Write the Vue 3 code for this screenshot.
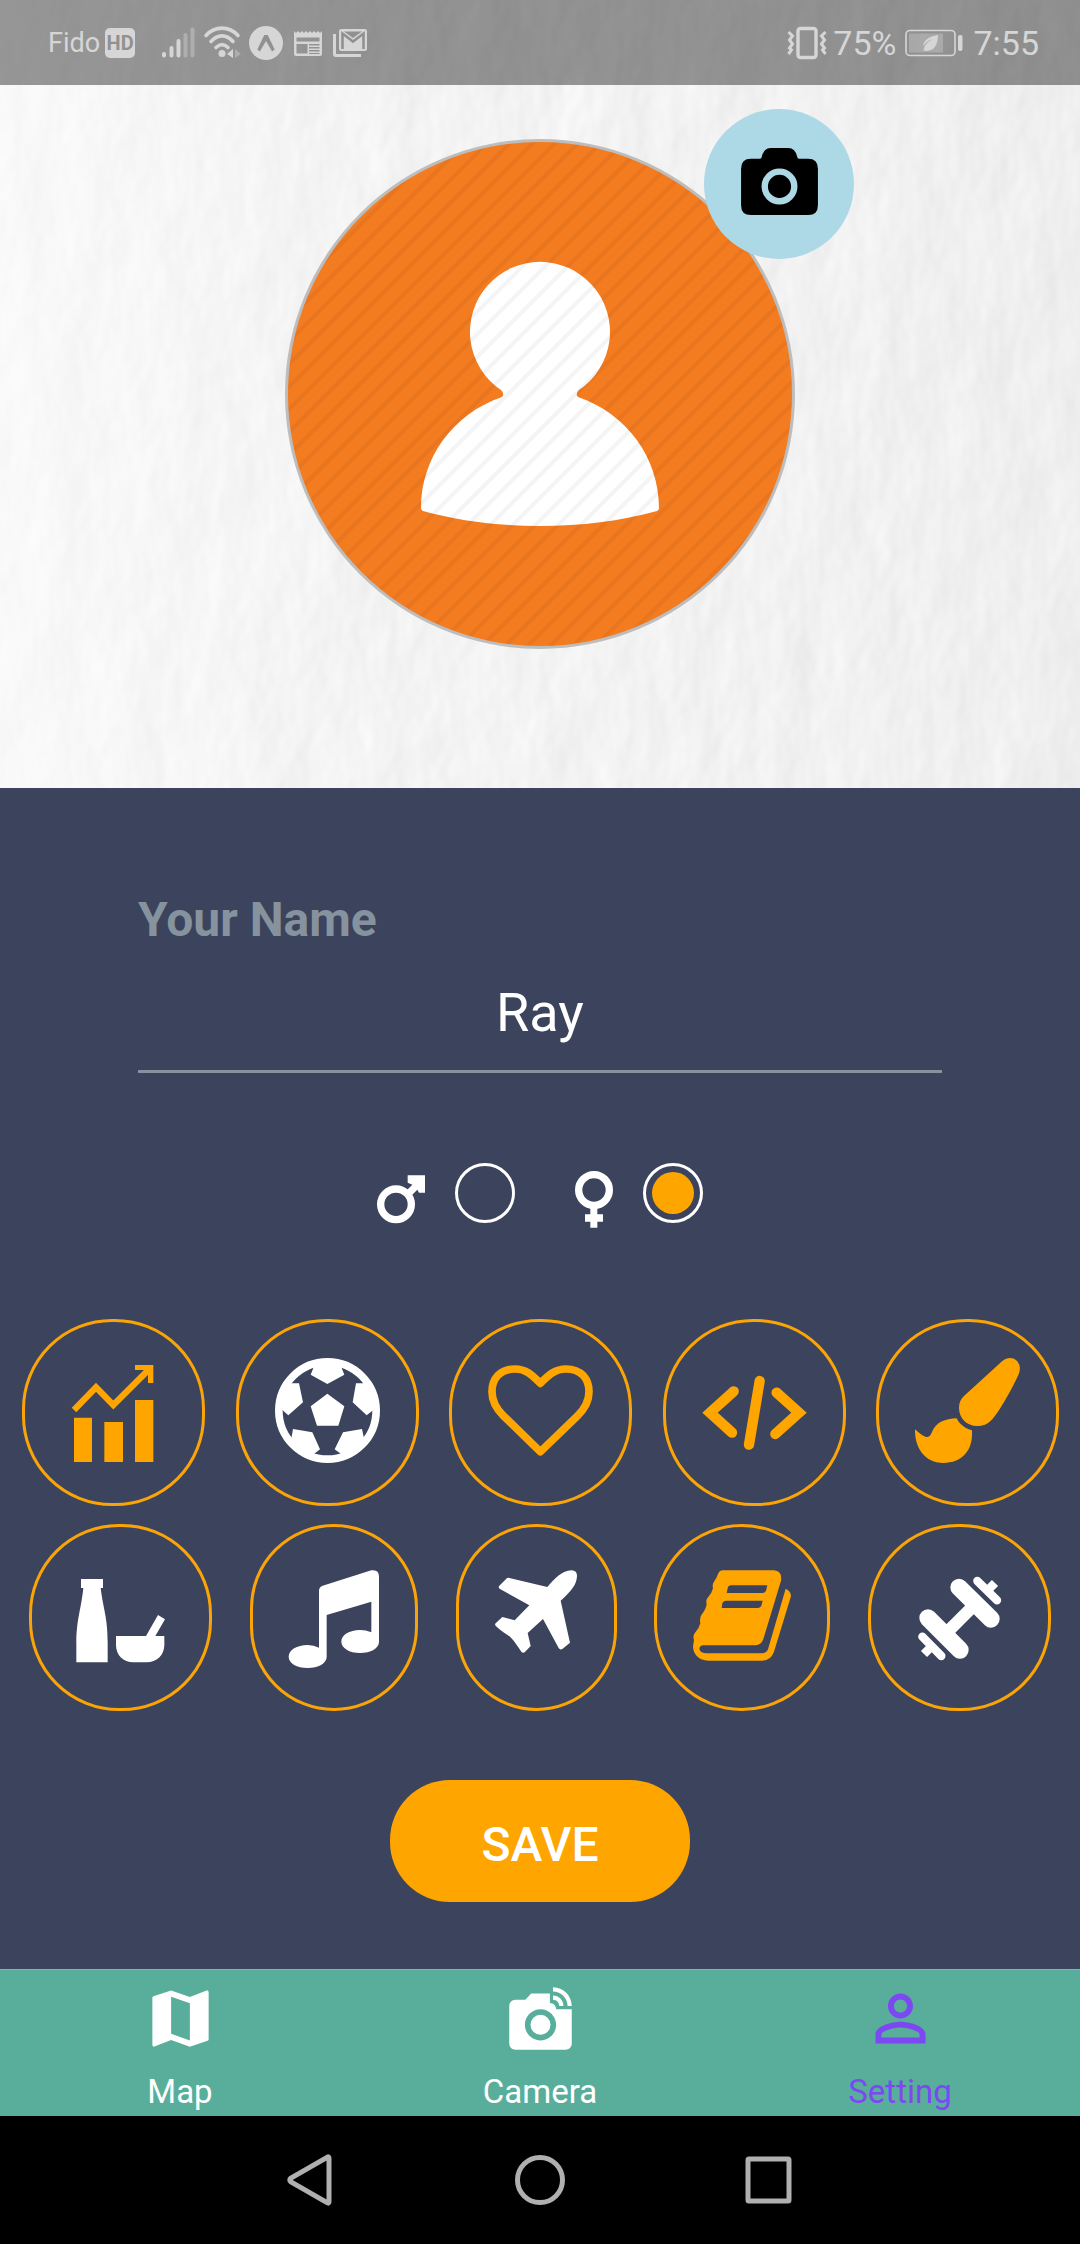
<script setup>
import { ref } from 'vue'

const name = ref('Ray')
const gender = ref('female')
const activeTab = ref('Setting')

const rows = ref([
  [
    { id: 'business', label: 'Business', on: true, width: 105, box: '183 174 315 315' },
    { id: 'sports', label: 'Sports', on: false, width: 105, box: '822 174 315 315' },
    { id: 'dating', label: 'Dating', on: true, width: 105, box: '204 174 315 315' },
    { id: 'coding', label: 'Coding', on: true, width: 105, box: '843 174 315 315' },
    { id: 'art', label: 'Art', on: true, width: 105, box: '795 174 315 315' },
  ],
  [
    { id: 'food', label: 'Food', on: false, width: 105, box: '204 789 315 315' },
    { id: 'music', label: 'Music', on: false, width: 90, box: '867 789 270 315' },
    { id: 'travel', label: 'Travel', on: false, width: 83, box: '225 789 249 315' },
    { id: 'reading', label: 'Reading', on: true, width: 98, box: '819 789 294 315' },
    { id: 'fitness', label: 'Fitness', on: false, width: 105, box: '771 789 315 315' },
  ],
])

const tabs = [
  {
    label: 'Map',
    path: 'M20.5 3l-.16.03L15 5.1 9 3 3.36 4.9c-.21.07-.36.25-.36.48V20.5c0 .28.22.5.5.5l.16-.03L9 18.9l6 2.1 5.64-1.9c.21-.07.36-.25.36-.48V3.5c0-.28-.22-.5-.5-.5zM15 19l-6-2.11V5l6 2.11V19z',
  },
  {
    label: 'Camera',
    path: 'M12 10.8a3.2 3.2 0 1 0 0 6.4 3.2 3.2 0 1 0 0-6.4zM16 3.33c2.58 0 4.67 2.09 4.67 4.67H22c0-3.31-2.69-6-6-6v1.33M16 6c1.11 0 2 .89 2 2h1.33c0-1.84-1.49-3.33-3.33-3.33V6M17 9c0-1.11-.89-2-2-2V4H9L7.17 6H4c-1.1 0-2 .9-2 2v12c0 1.1.9 2 2 2h16c1.1 0 2-.9 2-2V9h-5zm-5 10c-2.76 0-5-2.24-5-5s2.24-5 5-5 5 2.24 5 5-2.24 5-5 5z',
  },
  {
    label: 'Setting',
    path: 'M12 5.9c1.16 0 2.1.94 2.1 2.1s-.94 2.1-2.1 2.1S9.9 9.16 9.9 8s.94-2.1 2.1-2.1m0 9c2.97 0 6.1 1.46 6.1 2.1v1.1H5.9V17c0-.64 3.13-2.1 6.1-2.1M12 4C9.79 4 8 5.79 8 8s1.79 4 4 4 4-1.79 4-4-1.79-4-4-4zm0 9c-2.67 0-8 1.34-8 4v3h16v-3c0-2.66-5.33-4-8-4z',
  },
]
</script>

<template>
  <div class="screen">
    <header class="hero">
      <svg class="plaster" aria-hidden="true">
        <filter id="plaster" x="0" y="0" width="100%" height="100%" color-interpolation-filters="sRGB">
          <feTurbulence type="fractalNoise" baseFrequency="0.014 0.008" numOctaves="4" seed="7" result="n" />
          <feDiffuseLighting in="n" lighting-color="#ffffff" surfaceScale="1" diffuseConstant="1.08">
            <feDistantLight azimuth="200" elevation="62" />
          </feDiffuseLighting>
        </filter>
        <linearGradient id="light">
          <stop offset="0" stop-color="#fff" stop-opacity=".5" />
          <stop offset=".35" stop-color="#fff" stop-opacity="0" />
          <stop offset="1" stop-color="#000" stop-opacity=".02" />
        </linearGradient>
        <rect width="100%" height="100%" filter="url(#plaster)" />
        <rect width="100%" height="100%" fill="url(#light)" />
      </svg>

      <div class="status">
        <span class="carrier">Fido</span>
        <span class="hd">HD</span>
        <svg class="signal" width="33" height="34" viewBox="0 0 33 34">
          <g stroke="currentColor" stroke-width="4" stroke-linecap="round">
            <path d="M2 28v1.500M9.500 22v7.500M16.500 15v14.500" />
            <path d="M23.500 9v20.500M30.500 3.500v26" opacity=".4" />
          </g>
        </svg>
        <svg width="36" height="34" viewBox="0 0 36 34">
          <g fill="none" stroke="currentColor" stroke-width="3.600" stroke-linecap="round">
            <path d="M2 9.500C11-.300 25-.300 34 9.500M7 15.500c7-7.500 15-7.500 22 0M12 21.500c4-4 8-4 12 0" />
          </g>
          <circle cx="18" cy="27.500" r="3.500" fill="currentColor" />
          <path d="M29 23v9l-6-4z" fill="currentColor" />
          <path d="M31 23v9l6-4z" fill="currentColor" opacity=".4" />
        </svg>
        <svg width="34" height="34" viewBox="0 0 34 34">
          <circle cx="17" cy="17" r="17" fill="currentColor" />
          <path d="M15.300 9h3.400l7 14.500-2.600 2-6.100-10.500-6.100 10.500-2.600-2z" fill="#919191" />
        </svg>
        <svg width="32" height="34" viewBox="0 0 32 34">
          <path fill="currentColor" fill-rule="evenodd" d="M2 5l2 2 2-2 2 2 2-2 2 2 2-2 2 2 2-2 2 2 2-2 2 2 2-2 2 2 2-2v23a2 2 0 0 1-2 2H4a2 2 0 0 1-2-2zM4.500 11.500v4h23v-4zM4.500 18v9.500h11V18zM17 18v1.500h10.500V18zM17 21v1.500h10.500V21zM17 24v1.500h10.500V24zM17 27v1h10.500v-1z" />
        </svg>
        <svg width="34" height="34" viewBox="0 0 34 34">
          <path fill="currentColor" d="M0 8h3v20h25v3H3a3 3 0 0 1-3-3z" />
          <rect x="6" y="3" width="28" height="22" rx="2.500" fill="currentColor" />
          <path d="M9.500 23V7.500L20 15.500l10.500-8V23" fill="none" stroke="#919191" stroke-width="2.600" />
          <path d="M11 5.500h18l-9 6.500z" fill="#919191" />
        </svg>
        <span class="spacer"></span>
        <svg width="40" height="34" viewBox="0 0 40 34">
          <rect x="11" y="2.500" width="18" height="29" rx="2.500" fill="none" stroke="currentColor" stroke-width="3.400" />
          <path d="M1.500 6l4 4-3 4 3 4-3 4 2 2-3 4M38.500 6l-4 4 3 4-3 4 3 4-2 2 3 4" fill="none" stroke="currentColor" stroke-width="3" />
        </svg>
        <span class="percent">75%</span>
        <svg class="battery" width="59" height="34" viewBox="0 0 59 34">
          <rect x="1" y="4.500" width="49" height="25" rx="4" fill="none" stroke="currentColor" stroke-width="1.600" />
          <rect x="4" y="7.500" width="34" height="19" fill="currentColor" opacity=".35" />
          <rect x="53" y="9" width="4.500" height="16" rx="2" fill="currentColor" />
          <path d="M33 9c-9 1.500-15 5-14.500 11.500 2-4 5-6 9-7.500-5 3-8 6-9 11.500 9 2 14.500-4 14.500-15.500z" fill="currentColor" />
        </svg>
        <span class="clock">7:55</span>
      </div>

      <div class="avatar">
        <svg class="photo" viewBox="0 0 510 510" role="img" aria-label="Profile picture">
          <defs>
            <pattern id="stripes" width="16" height="16" patternUnits="userSpaceOnUse" patternTransform="rotate(45)">
              <rect width="4" height="16" fill="#000" opacity=".045" />
            </pattern>
          </defs>
          <circle cx="255" cy="255" r="255" fill="#bdbdbd" />
          <circle cx="255" cy="255" r="252" fill="#f37b20" />
          <path fill="#fff" d="M216 251A70 70 0 1 1 294 251Q290 255 293 258C343 275 374 320 374 369Q374 371 372 372C300 392 210 392 138 372Q136 371 136 369C136 320 167 275 217 258Q220 255 216 251Z" />
          <circle cx="255" cy="255" r="252" fill="url(#stripes)" />
        </svg>
        <button class="change" type="button" aria-label="Change picture">
          <svg width="77" height="67" viewBox="0 0 78 68">
            <path fill="#000" d="M10 11h9q2 0 2-2 2-9 9-9h18q7 0 9 9 0 2 2 2h9q10 0 10 10v37q0 10-10 10H10Q0 68 0 58V21Q0 11 10 11z" />
            <circle cx="39" cy="39" r="15" fill="none" stroke="#add8e6" stroke-width="6.500" />
          </svg>
        </button>
      </div>
    </header>

    <main class="form">
      <div class="field">
        <label for="name">Your Name</label>
        <input id="name" v-model="name" type="text" />
      </div>

      <div class="genders">
        <label class="gender">
          <svg width="48" height="60" viewBox="111 68 144 180" role="img" aria-label="Male">
            <circle cx="168" cy="192" r="46" fill="none" stroke="#fff" stroke-width="22" />
            <path d="M203 105h52v52h-18l-5-9-22 22-15-15 22-22-14-6z" fill="#fff" />
          </svg>
          <input v-model="gender" type="radio" name="gender" value="male" />
        </label>
        <label class="gender">
          <svg width="38" height="60" viewBox="705 68 114 180" role="img" aria-label="Female">
            <circle cx="762" cy="149" r="46" fill="none" stroke="#fff" stroke-width="22" />
            <path d="M751 200h21v22h17v22h-17v18h-21v-18h-16v-22h16z" fill="#fff" />
          </svg>
          <input v-model="gender" type="radio" name="gender" value="female" />
        </label>
      </div>

      <div class="interests">
        <div v-for="(row, r) in rows" :key="r" class="row">
          <button
            v-for="item in row"
            :key="item.id"
            type="button"
            class="interest"
            :class="{ on: item.on }"
            :aria-label="item.label"
            :aria-pressed="item.on"
            @click="item.on = !item.on"
          >
            <svg :width="item.width" height="105" :viewBox="item.box" fill="currentColor">
              <g v-if="item.id === 'business'">
                <path d="M222 353h54v133h-54zM313 366h56v120h-56zM405 300h55v186h-55zM405 195h55v54h-16v-39h-39z" />
                <path d="M222 330l66-68 52 53 109-109" fill="none" stroke="currentColor" stroke-width="19" />
              </g>
              <g v-else-if="item.id === 'sports'">
                <circle cx="979.500" cy="331.500" r="146" fill="none" stroke="currentColor" stroke-width="23" />
                <path d="M979 281l51 38-18 58h-64l-19-58z" />
                <path d="M937 192h85v12l8 20-51 28-50-28 8-20z" />
                <path d="M1065 250h26l24 20 16 56-14 4-20 16-42-39z" />
                <path d="M894 250h-26l-24 20-16 56 16 4 18 16 44-39z" />
                <path d="M1026 397l57-10 5 23 6 20-50 44-24-12-19-14z" />
                <path d="M934 397l-58-10-4 23-8 20 50 44 25-12 18-14z" />
              </g>
              <path
                v-else-if="item.id === 'dating'"
                d="M361 250C336 225 318 207 285 207C240 207 216 236 216 275C216 305 230 327 250 347L361 455L473 347C493 327 507 305 507 275C507 236 483 207 438 207C405 207 386 225 361 250Z"
                fill="none"
                stroke="currentColor"
                stroke-width="23"
                stroke-linejoin="round"
              />
              <g v-else-if="item.id === 'coding'" fill="none" stroke="currentColor" stroke-linecap="round">
                <path d="M938 274l-71 64 66 60M1067 278l67 60-71 64" stroke-width="31" />
                <path d="M1016 243l-32 191" stroke-width="31" />
              </g>
              <g v-else-if="item.id === 'art'">
                <path d="M1057 183C1072 170 1092 172 1102 184Q1115 200 1106 223C1090 258 1052 330 1028 356C1012 374 998 378 981 378C950 378 927 354 927 324C927 308 932 298 942 288Z" />
                <path d="M920 355C885 357 858 366 846 396C841 408 837 411 830 411C820 410 806 398 795 388C794 445 825 489 880 489C935 489 970 453 966 391C945 386 927 371 920 355Z" />
              </g>
              <g v-else-if="item.id === 'food'">
                <path d="M243 837h66v27h-7C310 930 323 950 323 1030V1087H229V1030C229 960 243 930 250 864h-7z" />
                <path d="M348 1008H438L474 945L495 958L466 1008H493V1035C493 1065 470 1087 440 1087H400C370 1087 348 1065 348 1035Z" />
              </g>
              <path
                v-else-if="item.id === 'music'"
                d="M957 872Q957 861 968 857L1114 811Q1137 808 1137 830V1025C1137 1045 1112 1059 1080 1059C1048 1059 1024 1044 1024 1025C1024 1005 1048 990 1080 990Q1098 990 1114 997V905L980 945V1070C980 1090 955 1104 923 1104C891 1104 866 1090 866 1070C866 1050 891 1035 923 1035Q942 1035 957 1043Z"
              />
              <path
                v-else-if="item.id === 'travel'"
                d="M382 861C405 835 425 812 455 811Q471 812 471 828C470 855 452 875 422 902L450 1028L427 1047Q420 1051 416 1044L369 957L323 999L332 1038L314 1057Q308 1060 304 1055C295 1042 285 1025 273 1013C260 1002 245 995 228 979Q223 974 227 970L247 951L284 961L328 916L240 867Q233 862 238 857L259 836Q263 832 268 834Z"
              />
              <path
                v-else-if="item.id === 'reading'"
                fill-rule="evenodd"
                d="M908 811H1062Q1087 813 1083 842L1030 1017Q1024 1036 1003 1036H850Q838 1037 838 1048Q842 1060 860 1060H1028Q1040 1058 1044 1048L1097 866Q1116 876 1112 892L1062 1055Q1052 1081 1028 1082H865Q822 1078 819 1040L822 1020Q818 1008 824 1000Q838 985 841 970Q838 955 844 945Q858 928 860 912Q857 902 862 895Q876 880 879 865Q876 852 882 845Q890 834 895 820Q899 811 908 811ZM934 856Q925 856 923 864L920 879H1029Q1036 878 1038 872L1042 856ZM917 902Q909 902 907 910L905 924H1014Q1022 923 1024 917L1028 902Z"
              />
              <g v-else fill="none" stroke="currentColor" stroke-linecap="round">
                <path d="M927 862l96 95M834 954l96 96" stroke-width="52" />
                <path d="M982 843l59 58M817 1010l57 58" stroke-width="25" />
                <path d="M882 1006l94-94" stroke-width="37" stroke-linecap="butt" />
                <path d="M1011 873l24-24M846 1038l-24 24" stroke-width="26" stroke-linecap="butt" />
              </g>
            </svg>
          </button>
        </div>
      </div>

      <button class="save" type="button">SAVE</button>
    </main>

    <nav class="tabs">
      <a
        v-for="tab in tabs"
        :key="tab.label"
        href="#"
        class="tab"
        :class="{ active: tab.label === activeTab }"
        @click.prevent="activeTab = tab.label"
      >
        <svg width="75" height="75" viewBox="0 0 24 24" fill="currentColor"><path :d="tab.path" /></svg>
        <span>{{ tab.label }}</span>
      </a>
    </nav>

    <div class="system">
      <button type="button" aria-label="Back">
        <svg width="50" height="54" viewBox="0 0 50 54"><path d="M43 5v44q0 2-2 .500L5 29q-2.500-2 0-4L41 4.500q2-1.500 2 .500z" /></svg>
      </button>
      <button type="button" aria-label="Home">
        <svg width="50" height="54" viewBox="0 0 50 54"><circle cx="25" cy="27" r="22.500" /></svg>
      </button>
      <button type="button" aria-label="Recents">
        <svg width="50" height="54" viewBox="0 0 50 54"><rect x="4" y="6" width="41" height="42" rx="1" /></svg>
      </button>
    </div>
  </div>
</template>

<style>
body {
  margin: 0;
  background: #000;
}
</style>

<style scoped>
.screen {
  display: flex;
  flex-direction: column;
  min-height: 100vh;
  font-family: Roboto, 'Noto Sans', sans-serif;
  background: #3b445c;
}

button {
  margin: 0;
  border: 0;
  font-family: inherit;
  cursor: pointer;
}

svg {
  display: block;
  flex: none;
  overflow: visible;
}

.hero {
  position: relative;
  display: flex;
  flex-direction: column;
  align-items: center;
  padding-bottom: 139px;
  background: #f3f3f3;
}

.plaster {
  position: absolute;
  inset: 0;
  width: 100%;
  height: 100%;
  overflow: hidden;
}

.status {
  position: relative;
  display: flex;
  align-items: center;
  gap: 9px;
  box-sizing: border-box;
  width: 100%;
  height: 85px;
  padding: 0 41px 0 48px;
  color: #d6d6d6;
  background: rgba(0, 0, 0, 0.4);
}

.carrier {
  font-size: 27px;
}

.hd {
  width: 30px;
  border-radius: 5px;
  margin-left: -4px;
  font-size: 20px;
  font-weight: 700;
  line-height: 30px;
  text-align: center;
  color: #919191;
  background: #d6d6d6;
}

.signal {
  margin-left: 18px;
}

.spacer {
  flex: 1;
}

.percent,
.clock {
  font-size: 34px;
}

.percent {
  margin-left: -3px;
}

.avatar {
  position: relative;
  width: 510px;
  margin-top: 54px;
}

.photo {
  width: 100%;
}

.change {
  position: absolute;
  top: -30px;
  right: -59px;
  display: flex;
  align-items: center;
  justify-content: center;
  width: 150px;
  height: 150px;
  padding: 0 0 5px;
  border-radius: 50%;
  background: #add8e6;
}

.form {
  display: flex;
  flex: 1;
  flex-direction: column;
  align-items: center;
  padding: 104px 0 67px;
}

.field {
  display: flex;
  flex-direction: column;
  align-self: stretch;
  margin: 0 138px;
}

.field label {
  font-size: 48px;
  font-weight: 700;
  line-height: 56px;
  color: #86939e;
}

.field input {
  box-sizing: border-box;
  width: 100%;
  height: 125px;
  padding: 6px 0 0;
  border: 0;
  border-bottom: 3px solid #86939e;
  border-radius: 0;
  outline: 0;
  font-family: inherit;
  font-size: 54px;
  text-align: center;
  color: #fff;
  background: transparent;
}

.genders {
  display: flex;
  gap: 60px;
  margin-top: 90px;
}

.gender {
  display: flex;
  align-items: center;
  gap: 30px;
}

.gender input {
  appearance: none;
  box-sizing: border-box;
  width: 60px;
  height: 60px;
  margin: 0;
  padding: 6px;
  border: 3px solid #fff;
  border-radius: 50%;
  background-clip: content-box;
}

.gender input:checked {
  background-color: #ffa500;
}

.interests {
  display: flex;
  flex-direction: column;
  align-self: stretch;
  gap: 18px;
  margin-top: 96px;
}

.row {
  display: flex;
  justify-content: space-between;
  padding: 0 21px 0 22px;
}

.row + .row {
  padding: 0 29px;
}

.interest {
  padding: 36px 36px 40px;
  border: 3px solid #fba408;
  border-radius: 90px;
  color: #fff;
  background: none;
}

.interest.on {
  color: #ffa500;
}

.save {
  width: 300px;
  height: 122px;
  margin-top: 69px;
  padding: 7px 0 0;
  border-radius: 60px;
  font-size: 48px;
  font-weight: 500;
  color: #fff;
  background: #ffa500;
}

.tabs {
  display: flex;
  border-top: 1px solid #a7a7aa;
  background: #59ae9b;
}

.tab {
  display: flex;
  flex: 1;
  flex-direction: column;
  align-items: center;
  gap: 16px;
  padding: 11px 0 5px;
  font-size: 33px;
  line-height: 39px;
  text-decoration: none;
  color: #fff;
}

.tab.active {
  color: #7c48f2;
}

.system {
  display: flex;
  align-items: center;
  justify-content: center;
  gap: 179px;
  height: 128px;
  background: #000;
}

.system button {
  padding: 0;
  background: none;
}

.system svg {
  fill: none;
  stroke: #b0b0b0;
  stroke-width: 5;
}
</style>
